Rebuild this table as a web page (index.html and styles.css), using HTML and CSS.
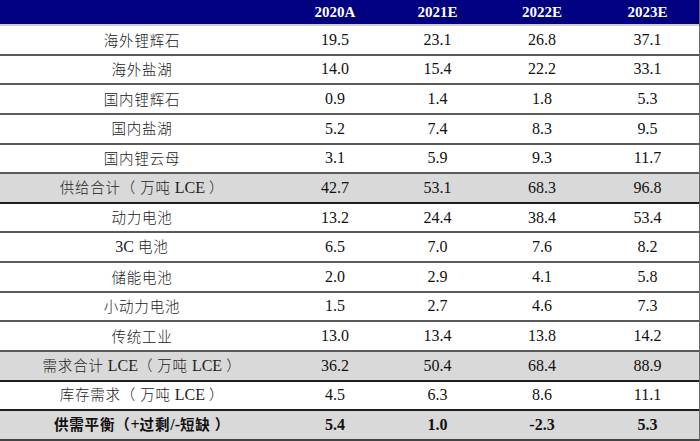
FILE: index.html
```html
<!DOCTYPE html>
<html lang="zh">
<head>
<meta charset="utf-8">
<link rel="stylesheet" href="styles.css">
</head>
<body>
<div class="table">
  <div class="row head">
    <div></div><div>2020A</div><div>2021E</div><div>2022E</div><div>2023E</div>
  </div>
  <div class="row first"><div class="lbl">海外锂辉石</div><div>19.5</div><div>23.1</div><div>26.8</div><div>37.1</div></div>
  <div class="row"><div class="lbl">海外盐湖</div><div>14.0</div><div>15.4</div><div>22.2</div><div>33.1</div></div>
  <div class="row"><div class="lbl">国内锂辉石</div><div>0.9</div><div>1.4</div><div>1.8</div><div>5.3</div></div>
  <div class="row"><div class="lbl">国内盐湖</div><div>5.2</div><div>7.4</div><div>8.3</div><div>9.5</div></div>
  <div class="row"><div class="lbl">国内锂云母</div><div>3.1</div><div>5.9</div><div>9.3</div><div>11.7</div></div>
  <div class="row gray"><div class="lbl">供给合计（ 万吨 <span class="lat">LCE</span> ）</div><div>42.7</div><div>53.1</div><div>68.3</div><div>96.8</div></div>
  <div class="row dark"><div class="lbl">动力电池</div><div>13.2</div><div>24.4</div><div>38.4</div><div>53.4</div></div>
  <div class="row"><div class="lbl"><span class="lat">3C</span> 电池</div><div>6.5</div><div>7.0</div><div>7.6</div><div>8.2</div></div>
  <div class="row"><div class="lbl">储能电池</div><div>2.0</div><div>2.9</div><div>4.1</div><div>5.8</div></div>
  <div class="row"><div class="lbl">小动力电池</div><div>1.5</div><div>2.7</div><div>4.6</div><div>7.3</div></div>
  <div class="row"><div class="lbl">传统工业</div><div>13.0</div><div>13.4</div><div>13.8</div><div>14.2</div></div>
  <div class="row gray"><div class="lbl">需求合计 <span class="lat">LCE</span>（ 万吨 <span class="lat">LCE</span> ）</div><div>36.2</div><div>50.4</div><div>68.4</div><div>88.9</div></div>
  <div class="row dark"><div class="lbl">库存需求（ 万吨 <span class="lat">LCE</span> ）</div><div>4.5</div><div>6.3</div><div>8.6</div><div>11.1</div></div>
  <div class="row gray bold last dark"><div class="lbl">供需平衡（<span class="lat">+</span>过剩<span class="lat">/-</span>短缺 ）</div><div>5.4</div><div>1.0</div><div>-2.3</div><div>5.3</div></div>
</div>
</body>
</html>
```

FILE: styles.css
```css
html, body {
  margin: 0;
  padding: 0;
  background: #ffffff;
}
.table {
  width: 700px;
  box-sizing: border-box;
  border-right: 1px solid #666;
  font-family: "Liberation Serif", "Noto Sans CJK SC", serif;
  font-size: 16px;
  color: #111;
}
.row {
  display: grid;
  grid-template-columns: 284px 102px 103px 106px 105px;
  height: 29.64px;
  box-sizing: border-box;
  border-top: 2px solid #5a5a5a;
  align-items: center;
  text-align: center;
}
.row > div {
  line-height: 1;
}
.head {
  height: 24px;
  border-top: none;
  background: #000080;
  color: #ffffff;
  font-weight: bold;
  font-size: 15px;
}
.first {
  border-top: 2px solid #cfcfcf;
}
.gray {
  background: #d9d9d9;
}
.dark {
  border-top-color: #1e1e1e;
}
.lbl {
  font-family: "Noto Sans CJK SC", sans-serif;
  font-size: 14.5px;
  font-weight: 300;
  color: #222;
  letter-spacing: 0.8px;
}
.lat {
  font-family: "Liberation Serif", serif;
  font-size: 16px;
  letter-spacing: 0;
  font-weight: normal;
}
.bold {
  font-weight: bold;
}
.bold .lbl {
  font-weight: bold;
  color: #111;
}
.bold .lat {
  font-weight: bold;
}
.last {
  height: 31.64px;
  border-bottom: 2px solid #444;
}
```
